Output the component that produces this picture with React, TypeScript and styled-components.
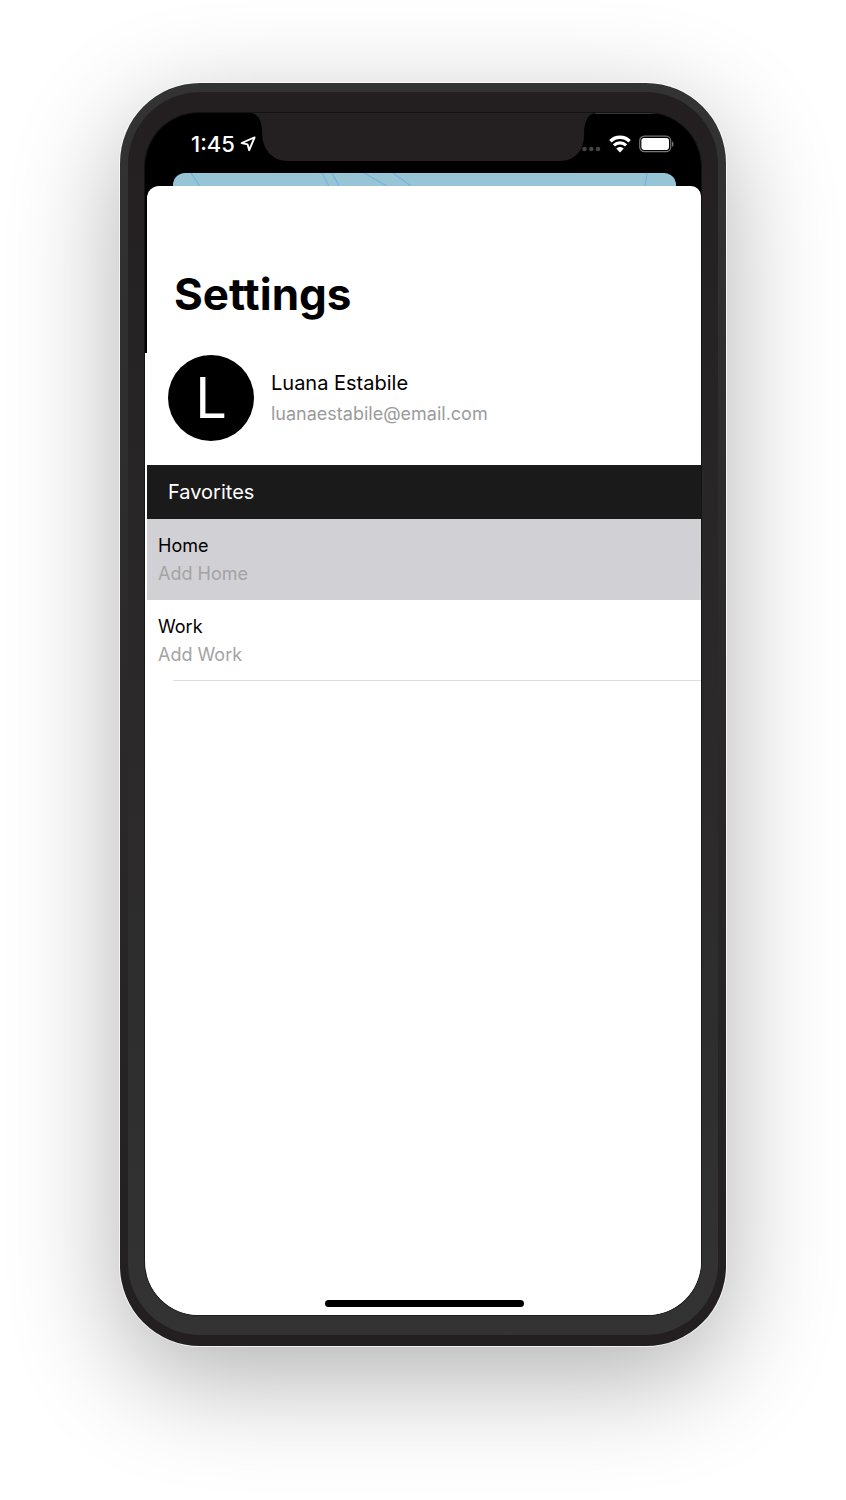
import React from "react";
import styled, { createGlobalStyle } from "styled-components";

const GlobalStyle = createGlobalStyle`
  *, *::before, *::after { box-sizing: border-box; }
  body {
    margin: 0;
    background: #fff;
    font-family: Inter, "Liberation Sans", sans-serif;
    color: #000;
  }
  h1, h2, p { margin: 0; font-weight: 400; }
`;

const Page = styled.main`
  display: flex;
  justify-content: center;
  min-height: 100vh;
  padding: 83px 120px 154px;
  overflow: hidden;
`;

const Phone = styled.div`
  display: flex;
  flex: 1;
  max-width: 640px;
  padding: 9px 8px 11px;
  border-radius: 80px;
  background: linear-gradient(#333333, #231f20);
  box-shadow: 0 0 0 1px rgba(255, 255, 255, 0.7), 0 32px 110px rgba(0, 0, 0, 0.31);
`;

const Bezel = styled.div`
  display: flex;
  flex: 1;
  padding: 21px 17px 20px;
  border-radius: 72px;
  background: linear-gradient(#231f20, #333333);
`;

const Screen = styled.div`
  position: relative;
  display: flex;
  flex: 1;
  flex-direction: column;
  overflow: hidden;
  border-radius: 54px;
  background: linear-gradient(#000 240px, #fff 240px);
  box-shadow: 0 0 0 1px rgba(0, 0, 0, 0.45);
`;

const Notch = styled.svg`
  position: absolute;
  top: 0;
  left: 50%;
  width: 344px;
  height: 48px;
  transform: translateX(-50%);
`;

const StatusBar = styled.header`
  display: flex;
  align-items: center;
  justify-content: space-between;
  height: 60px;
  padding: 2px 27px 0 46px;
  color: #fff;
`;

const StatusGroup = styled.div<{ $gap: number }>`
  display: flex;
  align-items: center;
  gap: ${(p) => p.$gap}px;
`;

const Clock = styled.time`
  font-size: 22px;
  line-height: 28px;
  font-weight: 500;
`;

const MapPeek = styled.svg`
  display: block;
  height: 13px;
  width: calc(100% - 53px);
  margin-left: 28px;
  border-radius: 12px 12px 0 0;
  background: #98c5d6;
`;

const Sheet = styled.section`
  display: flex;
  flex: 1;
  flex-direction: column;
  margin-left: 2px;
  border-radius: 12px 10px 0 0;
  background: #fff;
`;

const Title = styled.h1`
  padding: 80px 27px 0;
  font-size: 44px;
  line-height: 56px;
  font-weight: 700;
`;

const Profile = styled.div`
  display: flex;
  align-items: center;
  gap: 17px;
  padding: 33px 21px 24px;
`;

const Avatar = styled.div`
  display: grid;
  place-items: center;
  width: 86px;
  height: 86px;
  border-radius: 50%;
  background: #000;
  color: #fff;
  font-size: 56px;
  line-height: 86px;
  font-weight: 400;
`;

const Name = styled.p`
  font-size: 20px;
  line-height: 32px;
`;

const Email = styled.p`
  font-size: 18px;
  line-height: 30px;
  color: #9b9b9b;
`;

const SectionTitle = styled.h2`
  padding: 1px 21px 0;
  background: #1a1a1a;
  color: #fff;
  font-size: 20px;
  line-height: 53px;
`;

const Favorite = styled.button<{ $active?: boolean }>`
  position: relative;
  display: flex;
  flex-direction: column;
  height: 81px;
  padding: 13px 11px 11px;
  border: 0;
  background: ${(p) => (p.$active ? "#d1d0d5" : "#fff")};
  font: inherit;
  font-size: 18px;
  line-height: 28px;
  text-align: left;
  color: #000;

  &::after {
    content: "";
    position: absolute;
    right: 0;
    bottom: 0;
    left: 26px;
    height: 1px;
    background: ${(p) => (p.$active ? "transparent" : "#dcdcde")};
  }
`;

const Hint = styled.span`
  color: #a3a3a3;
`;

const HomeIndicator = styled.div`
  align-self: center;
  width: 199px;
  height: 7px;
  margin: auto 0 8px;
  border-radius: 4px;
  background: #000;
`;

const favorites = [
  { label: "Home", hint: "Add Home", active: true },
  { label: "Work", hint: "Add Work", active: false },
];

function LocationIcon() {
  return (
    <svg width="16" height="16" viewBox="0 0 16 16" fill="none" aria-hidden="true">
      <path d="M1.6 7 14.6 1.4 9.2 14.2 7.6 8.4Z" stroke="#fff" strokeWidth="1.9" strokeLinejoin="round" />
    </svg>
  );
}

function SignalIcon() {
  return (
    <svg width="26" height="18" viewBox="0 0 26 18" fill="#444" aria-hidden="true">
      <circle cx="3" cy="14" r="2.3" />
      <circle cx="9.5" cy="14" r="2.3" />
      <circle cx="16.3" cy="14" r="2.3" />
      <circle cx="23" cy="14" r="2.3" />
    </svg>
  );
}

function WifiIcon() {
  return (
    <svg width="22" height="18" viewBox="0 0 22 18" aria-hidden="true">
      <g fill="none" stroke="#fff">
        <path d="M1.4 6.2C6.9 .9 15.1 .9 20.6 6.2" strokeWidth="3.6" />
        <path d="M4.9 10.4C8.4 7.1 13.6 7.1 17.1 10.4" strokeWidth="3.2" />
      </g>
      <path d="M11 17.4 7.2 13.6C9.4 11.5 12.6 11.5 14.8 13.6Z" fill="#fff" />
    </svg>
  );
}

function BatteryIcon() {
  return (
    <svg width="35" height="18" viewBox="0 0 35 18" fill="none" aria-hidden="true">
      <rect x=".7" y="1.2" width="31" height="15.4" rx="4.6" stroke="#777" strokeWidth="1.2" />
      <rect x="2.4" y="2.9" width="27.6" height="12" rx="2.8" fill="#fff" />
      <path d="M33 6.2C35 7 35 11 33 11.8Z" fill="#777" />
    </svg>
  );
}

export default function App() {
  return (
    <>
      <GlobalStyle />
      <Page>
        <Phone>
          <Bezel>
            <Screen>
              <StatusBar>
                <StatusGroup $gap={5}>
                  <Clock>1:45</Clock>
                  <LocationIcon />
                </StatusGroup>
                <StatusGroup $gap={8}>
                  <SignalIcon />
                  <WifiIcon />
                  <BatteryIcon />
                </StatusGroup>
              </StatusBar>
              <Notch viewBox="0 0 344 48" overflow="visible" aria-hidden="true">
                <path
                  d="M0 0C8 1 11 9 11 19C11 36 21 48 37 48H309C324 48 333 37 333 22C333 8 337 1 344 0Z"
                  fill="#242021"
                />
                <path d="M344 .5H406" stroke="#3a3839" />
              </Notch>
              <MapPeek viewBox="0 0 503 13" preserveAspectRatio="none" aria-hidden="true">
                <g stroke="#79b2dc" strokeWidth="1.3" fill="none">
                  <path d="M18 0 27 13M149 0 156 13M159 0 166 13M191 0 214 13M220 0 238 13M474 0 472 13" />
                </g>
              </MapPeek>
              <Sheet>
                <Title>Settings</Title>
                <Profile>
                  <Avatar aria-hidden="true">L</Avatar>
                  <div>
                    <Name>Luana Estabile</Name>
                    <Email>luanaestabile@email.com</Email>
                  </div>
                </Profile>
                <SectionTitle>Favorites</SectionTitle>
                {favorites.map((f) => (
                  <Favorite key={f.label} type="button" $active={f.active}>
                    <span>{f.label}</span>
                    <Hint>{f.hint}</Hint>
                  </Favorite>
                ))}
                <HomeIndicator />
              </Sheet>
            </Screen>
          </Bezel>
        </Phone>
      </Page>
    </>
  );
}
